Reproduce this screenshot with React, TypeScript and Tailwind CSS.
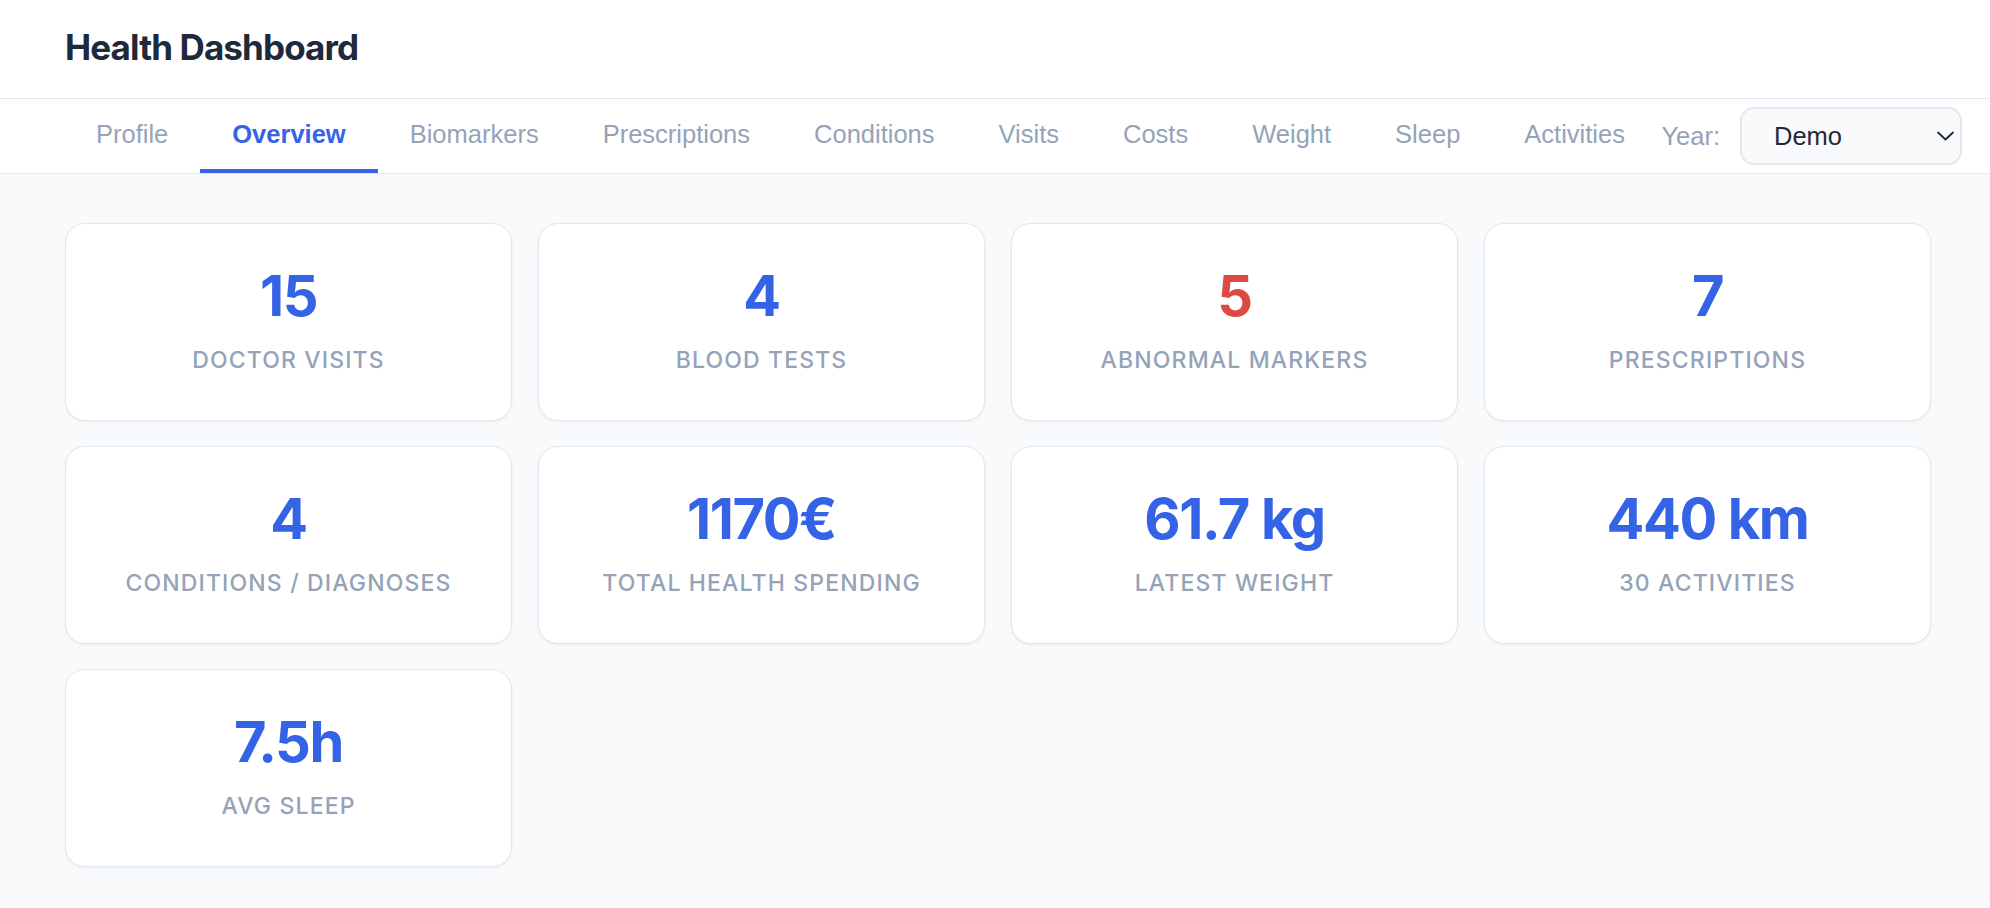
const tabs = [
	"Profile",
	"Overview",
	"Biomarkers",
	"Prescriptions",
	"Conditions",
	"Visits",
	"Costs",
	"Weight",
	"Sleep",
	"Activities",
];

const stats = [
	{ value: "15", label: "Doctor visits" },
	{ value: "4", label: "Blood tests" },
	{ value: "5", label: "Abnormal markers", alert: true },
	{ value: "7", label: "Prescriptions" },
	{ value: "4", label: "Conditions / Diagnoses" },
	{ value: "1170€", label: "Total health spending" },
	{ value: "61.7 kg", label: "Latest weight" },
	{ value: "440 km", label: "30 activities" },
	{ value: "7.5h", label: "Avg sleep" },
];

function StatCard({ value, label, alert }: { value: string; label: string; alert?: boolean }) {
	return (
		<div className="flex flex-col items-center rounded-[20px] border border-[#e2e8f0] bg-white pt-[44px] pb-[46px] shadow-[0_1px_3px_rgba(15,23,42,0.06)]">
			<span
				className={`text-[56px] font-bold leading-none tracking-tight ${alert ? "text-[#dc4a45]" : "text-[#3563e6]"}`}
			>
				{value}
			</span>
			<span className="mt-[22px] text-[23px] font-medium uppercase leading-[28px] tracking-wider text-[#94a3b8]">
				{label}
			</span>
		</div>
	);
}

export default function App() {
	const active = "Overview";

	return (
		<div className="min-h-screen bg-[#f8fafc] font-['Inter',sans-serif]">
			<header className="flex h-[99px] items-center border-b border-[#e2e8f0] bg-white px-[65px] pb-[4px]">
				<h1 className="text-[35px] font-bold tracking-tight text-[#1e293b]">Health Dashboard</h1>
			</header>

			<nav className="flex h-[75px] items-center border-b border-[#e2e8f0] bg-white pl-[64px] pr-[28px] font-['Liberation_Sans',Arial,sans-serif]">
				{tabs.map((tab) => (
					<button
						key={tab}
						className={`flex h-full items-center border-b-4 px-8 text-[25.5px] ${
							tab === active
								? "border-[#3563e6] font-bold text-[#3563e6]"
								: "border-transparent text-[#94a3b8]"
						}`}
					>
						{tab}
					</button>
				))}
				<label className="ml-auto text-[25.5px] text-[#94a3b8]">Year:</label>
				<div className="relative ml-[20px]">
					<select className="h-[58px] w-[222px] appearance-none rounded-[14px] border-2 border-[#e2e8f0] bg-[#f8fafc] pl-[32px] text-[25.5px] text-[#1e293b] outline-none">
						<option>Demo</option>
					</select>
					<svg
						viewBox="0 0 17 10"
						className="pointer-events-none absolute right-[8px] top-1/2 h-[10px] w-[17px] -translate-y-1/2 text-[#1e293b]"
						fill="none"
						stroke="currentColor"
						strokeWidth={1.8}
						strokeLinecap="round"
						strokeLinejoin="round"
					>
						<path d="M1 1.5 8.5 8.5 16 1.5" />
					</svg>
				</div>
			</nav>

			<main className="grid grid-cols-4 gap-x-[26px] gap-y-[25px] pl-[65px] pr-[59px] pt-[49px] pb-[40px]">
				{stats.map((s) => (
					<StatCard key={s.label} {...s} />
				))}
			</main>
		</div>
	);
}
